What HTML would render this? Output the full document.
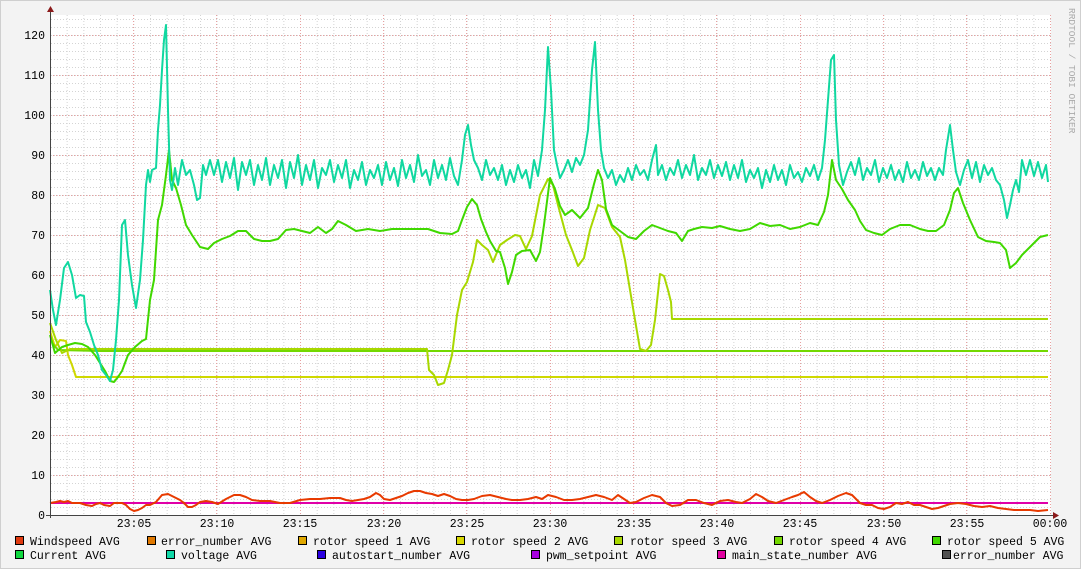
<!DOCTYPE html>
<html><head><meta charset="utf-8"><style>
html,body{margin:0;padding:0;background:#f3f3f3}
svg{display:block}
text{font-family:"Liberation Mono","DejaVu Sans Mono",monospace}
</style></head><body>
<svg width="1081" height="569" viewBox="0 0 1081 569" xmlns="http://www.w3.org/2000/svg">
<defs>
<pattern id="minV" x="50" y="0" width="16.667" height="569" patternUnits="userSpaceOnUse">
<line x1="0.5" y1="0" x2="0.5" y2="569" stroke="#d4d4d4" stroke-width="1" stroke-dasharray="1,2"/>
</pattern>
<pattern id="minH" x="0" y="515" width="1081" height="8" patternUnits="userSpaceOnUse">
<line x1="0" y1="0.5" x2="1081" y2="0.5" stroke="#d4d4d4" stroke-width="1" stroke-dasharray="1,2"/>
</pattern>
</defs>
<rect x="0" y="0" width="1081" height="569" fill="#f3f3f3"/>
<rect x="0.5" y="0.5" width="1080" height="568" fill="none" stroke="#cfcfcf"/>
<rect x="50" y="15" width="1001" height="500" fill="#ffffff"/>
<rect x="50" y="15" width="1001" height="500" fill="url(#minV)"/>
<rect x="50" y="15" width="1001" height="500" fill="url(#minH)"/>
<g stroke="#e8a0a0" stroke-width="1" stroke-dasharray="1,2">
<line x1="50" y1="475.5" x2="1051" y2="475.5"/><line x1="50" y1="435.5" x2="1051" y2="435.5"/>
<line x1="50" y1="395.5" x2="1051" y2="395.5"/><line x1="50" y1="355.5" x2="1051" y2="355.5"/>
<line x1="50" y1="315.5" x2="1051" y2="315.5"/><line x1="50" y1="275.5" x2="1051" y2="275.5"/>
<line x1="50" y1="235.5" x2="1051" y2="235.5"/><line x1="50" y1="195.5" x2="1051" y2="195.5"/>
<line x1="50" y1="155.5" x2="1051" y2="155.5"/><line x1="50" y1="115.5" x2="1051" y2="115.5"/>
<line x1="50" y1="75.5" x2="1051" y2="75.5"/><line x1="50" y1="35.5" x2="1051" y2="35.5"/>
<line x1="133.5" y1="15" x2="133.5" y2="515"/><line x1="216.5" y1="15" x2="216.5" y2="515"/>
<line x1="300.5" y1="15" x2="300.5" y2="515"/><line x1="383.5" y1="15" x2="383.5" y2="515"/>
<line x1="466.5" y1="15" x2="466.5" y2="515"/><line x1="550.5" y1="15" x2="550.5" y2="515"/>
<line x1="633.5" y1="15" x2="633.5" y2="515"/><line x1="716.5" y1="15" x2="716.5" y2="515"/>
<line x1="800.5" y1="15" x2="800.5" y2="515"/><line x1="883.5" y1="15" x2="883.5" y2="515"/>
<line x1="966.5" y1="15" x2="966.5" y2="515"/><line x1="1050.5" y1="15" x2="1050.5" y2="515"/>
</g>
<g font-size="11.5" fill="#000" text-anchor="end">
<text x="45" y="519">0</text><text x="45" y="479">10</text><text x="45" y="439">20</text>
<text x="45" y="399">30</text><text x="45" y="359">40</text><text x="45" y="319">50</text>
<text x="45" y="279">60</text><text x="45" y="239">70</text><text x="45" y="199">80</text>
<text x="45" y="159">90</text><text x="45" y="119">100</text><text x="45" y="79">110</text>
<text x="45" y="39">120</text>
</g>
<g font-size="11.5" fill="#000" text-anchor="middle">
<text x="134" y="527">23:05</text><text x="217" y="527">23:10</text><text x="300" y="527">23:15</text>
<text x="384" y="527">23:20</text><text x="467" y="527">23:25</text><text x="550" y="527">23:30</text>
<text x="634" y="527">23:35</text><text x="717" y="527">23:40</text><text x="800" y="527">23:45</text>
<text x="884" y="527">23:50</text><text x="967" y="527">23:55</text><text x="1050" y="527">00:00</text>
</g>
<text transform="translate(1069,8) rotate(90)" font-size="9.5" fill="#aaa">RRDTOOL / TOBI OETIKER</text>
<g fill="none" stroke-width="2" stroke-linejoin="round">
<polyline stroke="#cfd800" points="50,331 55,347 60,340 66,341 68,355 72,365 76,377 1048,377"/>
<polyline stroke="#74d800" points="52,343 58,350 100,351 1048,351"/>
<polyline stroke="#a8d800" points="50,323 56,340 62,353 70,349 427,349 429,370 434,375 438,385 444,383 448,370 452,355 457,315 462,290 467,282 473,262 477,240 482,245 488,250 493,262 500,245 507,240 515,235 520,236 526,249 532,236 540,195 548,179 553,185 558,205 566,235 572,250 578,266 584,258 590,230 598,205 605,208 612,227 620,237 625,260 630,290 634,314 640,349 646,351 651,345 655,320 660,274 664,276 668,290 671,302 672,319 1048,319"/>
<polyline stroke="#40d800" points="50,335 55,353 62,347 68,345 75,343 82,344 88,347 95,355 100,363 105,371 110,381 114,382 118,377 122,371 128,355 135,347 142,341 146,339 150,300 154,280 158,220 162,205 166,175 169,150 172,180 176,188 181,205 186,225 192,235 200,247 208,249 214,243 222,239 230,236 238,231 246,231 254,239 262,241 270,241 278,239 286,230 294,229 302,231 310,233 318,227 326,233 332,229 338,221 346,225 356,231 368,229 380,231 392,229 404,229 416,229 428,229 440,233 452,234 458,231 462,220 467,207 472,199 477,205 481,219 486,232 490,241 496,251 500,252 505,268 508,284 512,272 516,255 522,251 530,250 536,261 540,252 544,225 550,178 555,189 560,206 565,215 572,210 580,218 588,208 594,184 598,170 602,180 606,209 612,225 620,231 628,237 636,239 644,231 652,225 660,228 668,231 676,233 682,241 688,231 694,229 702,227 712,228 720,226 730,229 740,231 750,229 760,223 770,226 780,225 790,229 800,227 810,223 818,225 824,212 828,195 832,160 836,180 842,189 848,200 855,210 860,221 866,230 874,233 882,235 890,229 900,225 910,225 920,229 928,231 936,231 944,225 950,210 954,193 958,188 963,203 970,220 978,237 986,241 994,242 1000,243 1006,250 1010,268 1016,263 1022,255 1028,249 1034,243 1040,237 1048,235"/>
<polyline stroke="#10d8a0" points="50,290 53,310 56,325 60,300 64,268 68,262 72,275 76,298 80,295 84,296 86,322 90,332 94,345 98,355 102,370 106,375 110,381 113,370 116,340 119,300 122,225 125,220 128,255 132,285 136,308 140,280 143,240 146,185 148,170 150,182 152,170 156,168 158,130 160,105 162,70 164,40 166,25 168,110 170,180 172,190 175,168 178,185 182,160 186,175 190,170 194,185 197,200 200,198 203,165 206,175 210,160 214,175 218,160 222,182 226,162 230,178 234,158 238,190 242,162 246,175 250,160 254,185 258,165 262,180 266,158 270,185 274,165 278,178 282,160 286,188 290,162 294,178 298,155 302,185 306,165 310,180 314,160 318,188 322,168 326,175 330,160 334,182 338,165 342,178 346,160 350,188 354,170 358,180 362,162 366,185 370,170 374,178 378,165 382,185 386,162 390,180 394,168 398,186 402,160 406,178 410,165 414,182 418,155 422,176 426,170 430,185 434,160 438,178 442,165 446,180 450,158 454,176 458,185 462,160 465,135 468,125 471,145 474,160 478,168 482,180 486,160 490,175 494,168 498,180 502,165 506,185 510,170 514,182 518,165 522,178 526,170 530,188 534,160 538,176 542,150 545,110 548,47 551,90 554,150 557,165 560,178 564,170 568,160 572,172 576,158 580,165 584,155 588,130 592,70 595,42 598,110 601,150 604,168 608,178 612,170 616,185 620,175 624,182 628,168 632,180 636,165 640,175 644,170 648,180 652,160 656,145 658,175 662,165 666,180 670,168 674,175 678,160 682,178 686,165 690,175 694,155 698,180 702,168 706,175 710,160 714,178 718,165 722,176 726,162 730,180 734,165 738,178 742,160 746,182 750,170 754,178 758,168 762,188 766,170 770,182 774,165 778,180 782,170 786,185 790,165 794,178 798,172 802,182 806,168 810,176 814,165 818,180 822,168 825,140 828,100 831,60 834,55 836,120 839,165 843,185 847,172 851,162 855,175 859,158 863,180 867,168 871,175 875,160 879,182 883,168 887,178 891,165 895,180 899,170 903,182 907,162 911,178 915,170 919,180 923,162 927,176 931,168 935,180 939,168 943,175 946,150 950,125 953,150 956,172 960,185 964,170 968,160 972,178 976,162 980,182 984,165 988,175 992,168 996,180 1000,185 1004,200 1007,218 1010,205 1013,190 1016,180 1019,192 1022,160 1026,175 1030,160 1034,176 1038,162 1042,178 1046,165 1048,182"/>
<polyline stroke="#e000a8" points="50,503 1048,503"/>
<polyline stroke="#e83a00" points="50,503 56,502 60,501 64,502 68,501 72,503 76,503 80,503 86,505 92,506 96,504 100,503 104,505 110,506 114,503 118,503 122,503 126,505 130,509 134,511 138,510 142,508 146,505 150,505 156,502 162,495 168,494 174,497 180,500 184,503 188,507 192,507 196,505 200,502 206,501 212,502 218,504 226,499 234,495 240,495 246,497 252,500 260,501 270,501 280,503 290,503 300,500 310,499 320,499 330,498 340,498 346,500 352,501 358,500 364,499 370,497 376,493 380,495 384,499 390,500 396,498 402,496 408,493 414,491 420,491 426,493 432,494 438,496 444,494 450,496 456,499 462,500 468,500 474,499 482,496 490,495 498,497 506,499 512,500 520,500 528,499 536,497 542,499 548,495 556,497 564,500 572,500 580,499 588,497 596,495 604,497 612,500 618,495 624,499 630,503 636,502 644,498 652,495 660,497 666,503 672,506 680,505 688,500 696,500 704,503 712,505 720,501 728,500 736,502 742,503 750,499 756,494 762,497 768,501 776,503 784,500 792,497 798,495 804,492 810,497 816,501 822,503 830,500 838,496 846,493 852,495 860,503 866,505 872,505 878,508 884,509 890,507 896,503 902,504 908,502 914,505 920,505 926,507 932,509 938,508 944,506 950,504 958,503 966,504 974,506 982,507 990,506 998,508 1006,509 1014,510 1022,510 1030,510 1038,511 1048,510"/>
</g>
<g stroke="#444" stroke-width="1">
<line x1="50.5" y1="10" x2="50.5" y2="518"/>
<line x1="46" y1="515.5" x2="1055" y2="515.5"/>
</g>
<polygon points="47,12 54,12 50.5,6" fill="#8b1a1a"/>
<polygon points="1053,512 1053,519 1059,515.5" fill="#8b1a1a"/>
<g stroke="#000" stroke-width="1">
<rect x="15.5" y="536.5" width="8" height="8" fill="#e03a10"/>
<rect x="147.5" y="536.5" width="8" height="8" fill="#e07800"/>
<rect x="298.5" y="536.5" width="8" height="8" fill="#e0a800"/>
<rect x="456.5" y="536.5" width="8" height="8" fill="#d8d800"/>
<rect x="614.5" y="536.5" width="8" height="8" fill="#a8d800"/>
<rect x="774.5" y="536.5" width="8" height="8" fill="#74d800"/>
<rect x="932.5" y="536.5" width="8" height="8" fill="#40d800"/>
<rect x="15.5" y="550.5" width="8" height="8" fill="#10d840"/>
<rect x="166.5" y="550.5" width="8" height="8" fill="#10d8a8"/>
<rect x="317.5" y="550.5" width="8" height="8" fill="#2a00e0"/>
<rect x="531.5" y="550.5" width="8" height="8" fill="#a800e0"/>
<rect x="717.5" y="550.5" width="8" height="8" fill="#e000a0"/>
<rect x="942.5" y="550.5" width="8" height="8" fill="#505050"/>
</g>
<g font-size="11.5" fill="#000">
<text x="30" y="545">Windspeed AVG</text>
<text x="161" y="545">error_number AVG</text>
<text x="313" y="545">rotor speed 1 AVG</text>
<text x="471" y="545">rotor speed 2 AVG</text>
<text x="630" y="545">rotor speed 3 AVG</text>
<text x="789" y="545">rotor speed 4 AVG</text>
<text x="947" y="545">rotor speed 5 AVG</text>
<text x="30" y="559">Current AVG</text>
<text x="181" y="559">voltage AVG</text>
<text x="332" y="559">autostart_number AVG</text>
<text x="546" y="559">pwm_setpoint AVG</text>
<text x="732" y="559">main_state_number AVG</text>
<text x="953" y="559">error_number AVG</text>
</g>
</svg>
</body></html>
